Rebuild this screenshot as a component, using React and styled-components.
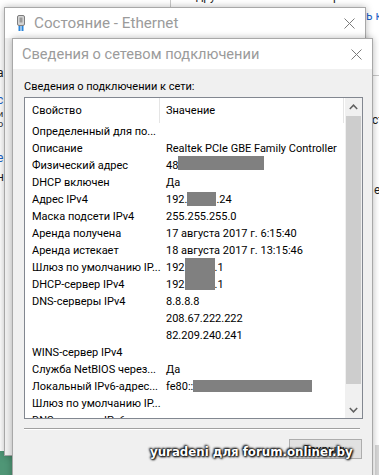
import React from 'react'
import styled, { createGlobalStyle } from 'styled-components'

const GlobalStyle = createGlobalStyle`
  html, body {
    margin: 0;
    padding: 0;
    background: #fff;
    overflow: hidden;
  }
  body {
    font-family: "Segoe UI", Roboto, "Noto Sans", sans-serif;
  }
`

// рабочий стол и обрывки окна проводника за диалогами
const Desktop = styled.div`
  position: relative;
  width: 379px;
  height: 475px;
  overflow: hidden;
  background: #fff;
`

const Fragment = styled.span`
  position: absolute;
  left: ${(p) => p.x}px;
  top: ${(p) => p.y}px;
  font-size: ${(p) => p.size || 12}px;
  line-height: ${(p) => p.size || 14}px;
  color: ${(p) => (p.blue ? '#1c64c8' : '#1e1e1e')};
  white-space: nowrap;
`

const Rule = styled.div`
  position: absolute;
  left: ${(p) => p.x}px;
  top: ${(p) => p.y}px;
  width: ${(p) => p.w}px;
  height: ${(p) => p.h}px;
  background: ${(p) => p.bg || '#c8c8c8'};
`

const Window = styled.div`
  position: absolute;
  left: ${(p) => p.x}px;
  top: ${(p) => p.y}px;
  width: ${(p) => p.w}px;
  height: ${(p) => p.h}px;
  box-sizing: border-box;
  border: 1px solid #a8a8a8;
  background: #f0f0f0;
  box-shadow: 0 0 7px rgba(0, 0, 0, 0.28);
  display: flex;
  flex-direction: column;
`

const TitleBar = styled.div`
  height: ${(p) => p.h}px;
  flex: none;
  background: #fff;
  display: flex;
  align-items: center;
  padding-left: ${(p) => p.pad}px;
  gap: 9px;
`

const TitleText = styled.span`
  flex: 1;
  font-size: ${(p) => p.size}px;
  color: #9b9b9b;
  white-space: nowrap;
`

const CloseBox = styled.div`
  width: 32px;
  height: 100%;
  display: flex;
  align-items: center;
  justify-content: center;
`

const Body = styled.div`
  flex: 1;
  padding: 11px 9px 0 11px;
  display: flex;
  flex-direction: column;
`

const Caption = styled.div`
  font-size: 11px;
  line-height: 14px;
  color: #000;
  margin-bottom: 3px;
`

const ListView = styled.div`
  height: 322px;
  box-sizing: border-box;
  border: 1px solid #828790;
  background: #fff;
  display: flex;
  overflow: hidden;
`

const Columns = styled.div`
  flex: 1;
  display: flex;
  flex-direction: column;
  overflow: hidden;
`

const HeaderRow = styled.div`
  height: 25px;
  flex: none;
  display: flex;
`

const HeaderCell = styled.div`
  width: ${(p) => p.w}px;
  box-sizing: border-box;
  padding-left: ${(p) => p.pad}px;
  border-right: 1px solid #e5e5e5;
  display: flex;
  align-items: center;
  font-size: 11px;
  color: #000;
`

const Row = styled.div`
  height: 17px;
  flex: none;
  display: flex;
  font-size: 11px;
  line-height: 17px;
  color: #000;
  white-space: nowrap;
`

const Cell = styled.div`
  width: ${(p) => p.w}px;
  box-sizing: border-box;
  padding-left: ${(p) => p.pad}px;
  flex: none;
  overflow: visible;
`

const Redact = styled.span`
  display: inline-block;
  position: relative;
  top: ${(p) => p.dy}px;
  width: ${(p) => p.w}px;
  height: ${(p) => p.h}px;
  background: #808080;
  vertical-align: top;
`

const ScrollBar = styled.div`
  width: 17px;
  flex: none;
  background: #f0f0f0;
  display: flex;
  flex-direction: column;
`

const ScrollArrow = styled.div`
  height: 17px;
  flex: none;
  display: flex;
  align-items: center;
  justify-content: center;
`

const Thumb = styled.div`
  height: 268px;
  margin: 1px 1px 0;
  background: #cdcdcd;
  flex: none;
`

const Spacer = styled.div`
  flex: 1;
`

const Separator = styled.div`
  margin: 9px 3px 0 0;
  height: 1px;
  background: #a0a0a0;
  border-bottom: 1px solid #fff;
`

const Footer = styled.div`
  margin-top: 9px;
  display: flex;
  justify-content: flex-end;
  padding-right: 1px;
`

const Button = styled.div`
  width: 73px;
  height: 20px;
  box-sizing: border-box;
  border: 1px solid #adadad;
  background: #e1e1e1;
  font-size: 11px;
  display: flex;
  align-items: center;
  justify-content: center;
  color: #000;
`

const Watermark = styled.div`
  position: absolute;
  left: 150px;
  top: 445px;
  font-family: "DejaVu Sans", Verdana, sans-serif;
  font-weight: bold;
  font-size: 11.8px;
  color: #fff;
  white-space: nowrap;
  text-shadow: 0 0 2px #000, 0 0 3px #000, 1px 1px 2px #000, -1px -1px 2px #333;
`

const CloseIcon = () => (
  <svg width="11" height="11" viewBox="0 0 11 11">
    <path d="M0.5 0.5 L10.5 10.5 M10.5 0.5 L0.5 10.5" stroke="#7b7b7b" strokeWidth="1" fill="none" />
  </svg>
)

const PlugIcon = () => (
  <svg width="8" height="16" viewBox="0 0 8 16">
    <rect x="0.5" y="0.5" width="7" height="10" rx="1.5" fill="#d4d4d4" stroke="#7d7d7d" />
    <rect x="2.5" y="2.5" width="3" height="5" fill="#9a9a9a" />
    <rect x="1.5" y="11" width="2" height="5" fill="#2a86dc" />
    <rect x="4.5" y="11" width="2" height="5" fill="#2a86dc" />
  </svg>
)

const Chevron = ({ down }) => (
  <svg width="9" height="6" viewBox="0 0 9 6">
    <polyline
      points={down ? '0.8,1 4.5,4.8 8.2,1' : '0.8,5 4.5,1.2 8.2,5'}
      stroke="#606060"
      strokeWidth="1.5"
      fill="none"
    />
  </svg>
)

const rows = [
  ['Определенный для по...', ''],
  ['Описание', 'Realtek PCIe GBE Family Controller'],
  ['Физический адрес', <>48<Redact w={86} h={14} dy={-1} /></>],
  ['DHCP включен', 'Да'],
  ['Адрес IPv4', <>192.<Redact w={29} h={14} dy={1} />.24</>],
  ['Маска подсети IPv4', '255.255.255.0'],
  ['Аренда получена', '17 августа 2017 г. 6:15:40'],
  ['Аренда истекает', '18 августа 2017 г. 13:15:46'],
  ['Шлюз по умолчанию IP...', <>192<Redact w={30} h={17} dy={-1} />.1</>],
  ['DHCP-сервер IPv4', <>192<Redact w={30} h={15} dy={-1} />.1</>],
  ['DNS-серверы IPv4', '8.8.8.8'],
  ['', '208.67.222.222'],
  ['', '82.209.240.241'],
  ['WINS-сервер IPv4', ''],
  ['Служба NetBIOS через...', 'Да'],
  ['Локальный IPv6-адрес...', <>fe80::<Redact w={119} h={12} dy={2} /></>],
  ['Шлюз по умолчанию IP...', ''],
  ['DNS-серверы IPv6', ''],
]

const App = () => {
  return (
    <Desktop>
      <GlobalStyle />

      <Fragment x={196} y={-11}>дру</Fragment>
      <Fragment x={333} y={-11}>р</Fragment>
      <Rule x={170} y={0} w={1} h={7} />
      <Fragment x={366} y={9} blue>ь к</Fragment>
      <Rule x={373} y={75} w={6} h={1} />
      <Fragment x={372} y={113}>ст</Fragment>
      <Fragment x={374} y={183}>е</Fragment>
      <Fragment x={-3} y={66}>а</Fragment>
      <Fragment x={-3} y={93} blue>с</Fragment>
      <Fragment x={-2} y={110} size={9}>и</Fragment>
      <Fragment x={-2} y={120} size={9}>о</Fragment>
      <Fragment x={-3} y={151} blue>е</Fragment>
      <Fragment x={-3} y={170}>н</Fragment>
      <Rule x={0} y={451} w={14} h={24} bg="#4f9676" />
      <Rule x={375} y={445} w={4} h={30} bg="#d8d8d8" />

      <Window x={4} y={7} w={362} h={449}>
        <TitleBar h={30} pad={12}>
          <PlugIcon />
          <TitleText size={15.2}>Состояние - Ethernet</TitleText>
          <CloseBox>
            <CloseIcon />
          </CloseBox>
        </TitleBar>
      </Window>

      <Window x={12} y={38} w={361} h={450}>
        <TitleBar h={30} pad={9}>
          <TitleText size={14.6}>Сведения о сетевом подключении</TitleText>
          <CloseBox>
            <CloseIcon />
          </CloseBox>
        </TitleBar>
        <Body>
          <Caption>Сведения о подключении к сети:</Caption>
          <ListView>
            <Columns>
              <HeaderRow>
                <HeaderCell w={135} pad={7}>Свойство</HeaderCell>
                <HeaderCell w={184} pad={6}>Значение</HeaderCell>
              </HeaderRow>
              {rows.map(([name, value], i) => (
                <Row key={i}>
                  <Cell w={135} pad={7}>{name}</Cell>
                  <Cell w={184} pad={6}>{value}</Cell>
                </Row>
              ))}
            </Columns>
            <ScrollBar>
              <ScrollArrow>
                <Chevron />
              </ScrollArrow>
              <Thumb />
              <Spacer />
              <ScrollArrow>
                <Chevron down />
              </ScrollArrow>
            </ScrollBar>
          </ListView>
          <Separator />
          <Footer>
            <Button>Закрыть</Button>
          </Footer>
        </Body>
      </Window>

      <Watermark>yuradeni для forum.onliner.by</Watermark>
    </Desktop>
  )
}

export default App
